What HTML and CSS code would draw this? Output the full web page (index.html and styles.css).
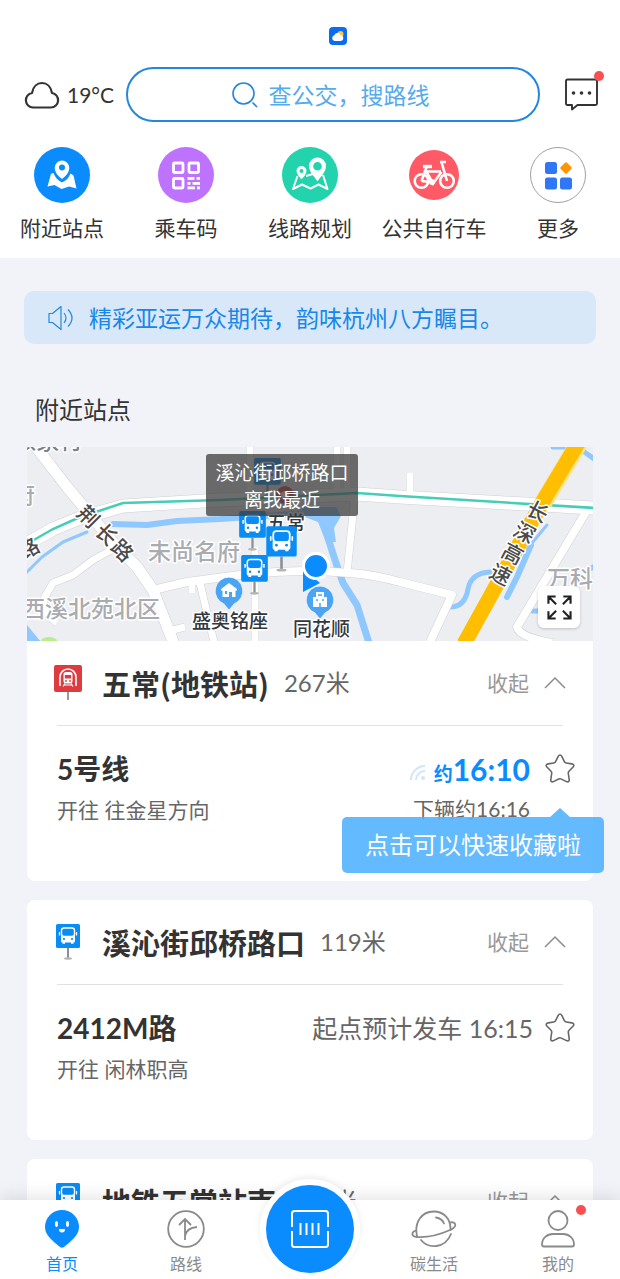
FILE: index.html
```html
<!DOCTYPE html>
<html lang="zh-CN">
<head>
  <meta charset="UTF-8" />
  <meta name="viewport" content="width=device-width, initial-scale=1" />
  <title>附近站点</title>
  <link rel="stylesheet" href="styles.css">
</head>
<body>
  <!-- shared icons -->
  <svg class="sprite" aria-hidden="true">
    <symbol id="bus-sign" viewBox="0 0 26 36">
      <rect x="12" y="24" width="2" height="11" fill="#8a8f96" />
      <ellipse cx="13" cy="34.5" rx="4" ry="1.2" fill="#b5b5b5" />
      <rect x="1" y="0" width="24" height="24" rx="1.5" fill="#0a8cf5" />
      <rect x="6.500" y="4" width="13" height="8.500" rx="2.500" fill="none" stroke="#fff" stroke-width="1.400" />
      <path d="M6 12h14v5q0 1.500-1.500 1.500h-11Q6 18.500 6 17z" fill="#fff" />
      <path d="M4.500 8v3.500M21.500 8v3.500" stroke="#fff" stroke-width="1.300" />
      <path d="M7.500 18h2.500v1.700H7.500zM16 18h2.500v1.700H16z" fill="#fff" />
      <circle cx="9" cy="15" r="1.100" fill="#0a8cf5" />
      <circle cx="17" cy="15" r="1.100" fill="#0a8cf5" />
    </symbol>
    <symbol id="metro-sign" viewBox="0 0 28 36">
      <rect x="13" y="27" width="2" height="8" fill="#999" />
      <rect x="0" y="0" width="28" height="27" rx="2" fill="#dd3b3f" />
      <path d="M6 21V12a8 8 0 0 1 16 0v9" fill="none" stroke="#fff" stroke-width="1.600" />
      <rect x="9.500" y="7" width="9" height="11.500" rx="2.500" fill="#fff" />
      <rect x="10.800" y="10" width="6.400" height="3.500" fill="#dd3b3f" />
      <circle cx="12" cy="16" r=".9" fill="#dd3b3f" />
      <circle cx="16" cy="16" r=".9" fill="#dd3b3f" />
      <path d="M11 18.500l-2 3M17 18.500l2 3M10.500 20h7" stroke="#fff" stroke-width="1.200" />
    </symbol>
    <symbol id="chevron-up" viewBox="0 0 22 14">
      <path d="M1 12L11 2l10 10" fill="none" stroke="#8c8c8c" stroke-width="1.500" />
    </symbol>
    <symbol id="star" viewBox="0 0 30 30">
      <path d="M13.200 2.400q1.800-2.800 3.600 0l2.600 5.200q.6 1.200 1.900 1.400l5.600.9q3 .7 1.200 3.100l-4.100 4.300q-.9.900-.7 2.200l.9 6q.2 3.200-2.700 2.100l-5.200-2.500q-1.300-.6-2.600 0l-5.200 2.500q-2.900 1.100-2.700-2.100l.9-6q.2-1.300-.7-2.200L1.900 13q-1.800-2.400 1.200-3.100l5.600-.9q1.300-.2 1.900-1.400z" fill="none" stroke="#666" stroke-width="1.600" stroke-linejoin="round" />
    </symbol>
  </svg>

  <div class="app">
    <header class="top">
      <div class="status">
        <svg class="status-icon" viewBox="0 0 18 18">
          <rect width="18" height="18" rx="4" fill="#0a6cf0" />
          <circle cx="11.500" cy="7" r="3" fill="#f7c948" />
          <path d="M5.500 14a3 3 0 0 1-.2-5.800 3.500 3.500 0 0 1 6.300-.3A3.100 3.100 0 0 1 12 14z" fill="#fff" />
        </svg>
      </div>

      <div class="search-row">
        <div class="weather">
          <svg class="weather-icon" viewBox="0 0 36 28">
            <path d="M9 26.500a7.300 7.300 0 0 1-1-14.500C9 5.800 13 2 18 2s9 3.800 10 10a7.300 7.300 0 0 1-1 14.500z" fill="none" stroke="#333" stroke-width="2.200" stroke-linejoin="round" />
          </svg>
          <span>19°C</span>
        </div>
        <label class="search">
          <svg class="search-icon" viewBox="0 0 26 26">
            <circle cx="11.500" cy="11.500" r="10.500" fill="none" stroke="#2287dd" stroke-width="1.600" />
            <path d="M20.500 20.500l4.500 4.500" stroke="#2287dd" stroke-width="1.600" />
          </svg>
          <input type="text" class="search-input" placeholder="查公交，搜路线" aria-label="搜索" />
        </label>
        <button type="button" class="message" aria-label="消息">
          <svg viewBox="0 0 34 34">
            <path d="M2.500 1.500h28q1.500 0 1.500 1.500v22.500q0 1.500-1.500 1.500H12.500L7 31.500V27H2.500Q1 27 1 25.500V3q0-1.500 1.500-1.500z" fill="none" stroke="#333" stroke-width="1.900" stroke-linejoin="round" />
            <g fill="#333"><circle cx="8.500" cy="15" r="1.800" /><circle cx="16.500" cy="15" r="1.800" /><circle cx="24.500" cy="15" r="1.800" /></g>
          </svg>
          <i class="dot"></i>
        </button>
      </div>

      <nav class="quick">
        <a href="#" class="quick-item">
          <svg viewBox="0 0 56 56">
            <circle cx="28" cy="28" r="28" fill="#0a8cff" />
            <path d="M19.500 26l-2.500.8-3.500 12.700 7-1.500 7 4 7.500-2.500 7.500 2-3-13-3-2c-1.500 4.500-5 7.500-8.500 9-4-2-7-5-8.500-9.500z" fill="#fff" />
            <path fill-rule="evenodd" d="M28 13.500a7.300 7.300 0 0 0-7.300 7.300c0 5 4.300 9 7.300 11.200 3-2.200 7.300-6.200 7.300-11.200a7.300 7.300 0 0 0-7.300-7.300zm0 4a3 3 0 1 1 0 6 3 3 0 0 1 0-6z" fill="#fff" />
          </svg>
          <span>附近站点</span>
        </a>
        <a href="#" class="quick-item">
          <svg viewBox="0 0 56 56">
            <circle cx="28" cy="28" r="28" fill="#bd73ff" />
            <g fill="none" stroke="#fff" stroke-width="2.800">
              <rect x="15.500" y="16" width="9.500" height="9.500" rx="1" />
              <rect x="31" y="16" width="9.500" height="9.500" rx="1" />
              <rect x="15.500" y="31.500" width="9.500" height="9.500" rx="1" />
            </g>
            <g fill="#fff">
              <rect x="29.500" y="30" width="7" height="2.800" /><rect x="38.500" y="30" width="3.500" height="2.800" />
              <rect x="29.500" y="35" width="3" height="2.800" /><rect x="34.500" y="35" width="7.500" height="2.800" />
              <rect x="29.500" y="39.500" width="7.500" height="2.800" /><rect x="39" y="39.500" width="3" height="2.800" />
            </g>
          </svg>
          <span>乘车码</span>
        </a>
        <a href="#" class="quick-item">
          <svg viewBox="0 0 56 56">
            <circle cx="28" cy="28" r="28" fill="#22d3ad" />
            <path d="M15.500 29l-4.500 13 9-4.500 8.500 4 8-4 9 4.500L41 28M24 29l7-2" fill="none" stroke="#fff" stroke-width="2" stroke-linejoin="round" />
            <path fill-rule="evenodd" d="M19.500 19a5 5 0 0 0-5 5c0 3 3 6 5 8.500 2-2.500 5-5.500 5-8.500a5 5 0 0 0-5-5zm0 3a2 2 0 1 1 0 4 2 2 0 0 1 0-4z" fill="#fff" />
            <path fill-rule="evenodd" d="M35.500 10.500a8.500 8.500 0 0 0-8.500 8.500c0 6 5.500 10.500 8.500 15.500 3-5 8.500-9.500 8.500-15.500a8.500 8.500 0 0 0-8.500-8.500zm0 4.500a4.300 4.300 0 1 1 0 8.600 4.300 4.300 0 0 1 0-8.600z" fill="#fff" />
          </svg>
          <span>线路规划</span>
        </a>
        <a href="#" class="quick-item">
          <svg viewBox="0 0 56 56">
            <circle cx="28" cy="28" r="25" fill="#ff5a65" />
            <g fill="none" stroke="#fff" stroke-width="2.600">
              <circle cx="15.500" cy="34" r="6.800" /><circle cx="41" cy="34" r="6.800" />
              <path d="M15.500 34L20.500 20.500M17.500 24.500H35M34 15h6M35.500 15l5.500 19M35.500 25L27 36.500 20.500 25M15.500 34l9 1" />
              <path d="M17 19.500h9" stroke-width="3.400" />
            </g>
            <circle cx="26" cy="35" r="3" fill="#fff" />
          </svg>
          <span>公共自行车</span>
        </a>
        <a href="#" class="quick-item">
          <svg viewBox="0 0 56 56">
            <circle cx="28" cy="28" r="27.500" fill="#fff" stroke="#888" stroke-width=".8" />
            <g fill="#2f77f6">
              <rect x="15" y="15" width="12" height="12" rx="2.500" />
              <rect x="15" y="30.500" width="12" height="12" rx="2.500" />
              <rect x="30" y="30.500" width="12" height="12" rx="2.500" />
            </g>
            <rect x="31.500" y="16.500" width="9" height="9" rx="1.500" fill="#ff9500" transform="rotate(45 36 21)" />
          </svg>
          <span>更多</span>
        </a>
      </nav>
    </header>

    <main class="content">
      <div class="notice">
        <svg class="notice-icon" viewBox="0 0 26 26">
          <path d="M1 8.500v9h3.500L13 24.500V1.500L4.500 8.500z" fill="none" stroke="#2287dd" stroke-width="1.200" stroke-linejoin="round" />
          <path d="M16 8q4 5 0 10M20 4.500q8 8.500 0 17" fill="none" stroke="#2287dd" stroke-width="1.200" />
        </svg>
        <span>精彩亚运万众期待，韵味杭州八方瞩目。</span>
      </div>

      <h2 class="section-title">附近站点</h2>

      <section class="card">
        <div class="map">
          <svg class="map-canvas" viewBox="0 0 566 194">
            <rect width="566" height="194" fill="#edeef1" />
            <!-- water -->
            <g fill="none" stroke="#8fc8ff" stroke-linecap="round" stroke-linejoin="round">
              <path d="M-2 127L15 110 36 95 60 85" stroke-width="3" />
              <path d="M86 77L120 78 150 74 193 72 280 66" stroke-width="6" />
              <path d="M300 88L309 116 316 136 330 158 342 196" stroke-width="7" />
              <path d="M520 78L505 96 500 110 490 130" stroke-width="3" />
              <path d="M504 98L490 130 480 150" stroke-width="6" />
              <path d="M463 125Q444 126 441 142 438 160 423 160" stroke-width="5" />
              <path d="M556 4l14 10M526 0h12M505 164h8M563 122l5-3" stroke-width="5" />
            </g>
            <path d="M275 60h34l5 9-7 12 2 14-10 0-8-20-16-6zM0 178l14 17H0z" fill="#8fc8ff" />
            <ellipse cx="22" cy="194" rx="8" ry="4" fill="#b9ec8c" />
            <!-- road edges, then road fill -->
            <g fill="none" stroke="#cfd0d4" stroke-linejoin="round">
              <path d="M223-2V50M310-2V48M320-2V48M383 26V50M328 48L320 126M228 100V195M173 136L187 195M165 134v12M142 184l16-4M88 101L66 113 46 128 26 136 16 153 20 168 30 176" stroke-width="8" />
              <path d="M126 143L160 135 213 128Q270 121 323 126 348 128 373 135L425 148 403 195M562 60L490 180Q492 190 525 196" stroke-width="9" />
              <path d="M-2 98L26 82 53 71 75 65 96 59 193 53 330 47 373 50 568 61" stroke-width="14" />
              <path d="M6-4L40 40 90 100 110 120 126 143 147 197" stroke-width="12" />
            </g>
            <g fill="none" stroke="#fff" stroke-linejoin="round">
              <path d="M223-2V50M310-2V48M320-2V48M383 26V50M328 48L320 126M228 100V195M173 136L187 195M165 134v12M142 184l16-4M88 101L66 113 46 128 26 136 16 153 20 168 30 176" stroke-width="7" />
              <path d="M126 143L160 135 213 128Q270 121 323 126 348 128 373 135L425 148 403 195M562 60L490 180Q492 190 525 196" stroke-width="8" />
              <path d="M-2 98L26 82 53 71 75 65 96 59 193 53 330 47 373 50 568 61" stroke-width="13" />
              <path d="M6-4L40 40 90 100 110 120 126 143 147 197" stroke-width="11" />
            </g>
            <path d="M-2 98L26 82 53 70 75 63 96 56 193 53 330 46 373 49 568 61" fill="none" stroke="#45cdb5" stroke-width="2.500" />
            <path d="M552-4L516 56" fill="none" stroke="#f6e489" stroke-width="18" />
            <path d="M551-4L515 56 437 197" fill="none" stroke="#ffbe00" stroke-width="15" />

            <!-- area names -->
            <g class="map-area">
              <text x="-14" y="2" class="map-dim">张家村</text>
              <text x="-15" y="56">府</text>
              <text x="121" y="113">未尚名府</text>
              <text x="-5" y="170">西溪北苑北区</text>
              <text x="520" y="140">万科</text>
            </g>
            <!-- road names, one glyph each along the road -->
            <g class="map-road">
              <text transform="translate(62 69) rotate(45)">荆</text>
              <text transform="translate(80 87) rotate(45)">长</text>
              <text transform="translate(96 103) rotate(45)">路</text>
              <text transform="translate(1 101) rotate(-30)">路</text>
              <text transform="translate(511 64) rotate(28)">长</text>
              <text transform="translate(498 85) rotate(28)">深</text>
              <text transform="translate(486 106) rotate(28)">高</text>
              <text transform="translate(474 127) rotate(28)">速</text>
            </g>
            <g class="map-poi">
              <text x="240" y="83">五常</text>
              <text x="165" y="181">盛奥铭座</text>
              <text x="266" y="189">同花顺</text>
            </g>

            <!-- poi pins -->
            <g fill="#4aa5f5">
              <path d="M202 130.500a13.500 13.500 0 0 1 5 26l-5 6-5-6a13.500 13.500 0 0 1 5-26z" />
              <path d="M293 139.500a13.500 13.500 0 0 1 5 26l-5 6-5-6a13.500 13.500 0 0 1 5-26z" />
            </g>
            <path d="M194 142l8-6 8 6v1.500h-1.500v6.500h-3.500v-5h-3v5h-6.500v-6.500H194z" fill="#fff" />
            <path d="M198 144h2v3h-2z" fill="#4aa5f5" />
            <path d="M289 145h8v5h3v10h-14v-10h3z" fill="#fff" />
            <path d="M291 148h4M289 153h2M295 153h2M293 156v4" stroke="#4aa5f5" stroke-width="1.500" />

            <!-- stops -->
            <circle cx="258" cy="48" r="9" fill="#d94545" />
            <circle cx="258" cy="48" r="4" fill="#fff" />
            <use href="#bus-sign" x="226" y="11" width="29" height="40" />
            <use href="#bus-sign" x="211" y="64" width="29" height="40" />
            <use href="#bus-sign" x="213" y="108" width="29" height="40" />
            <use href="#bus-sign" x="238" y="79" width="33" height="46" />

            <!-- own position -->
            <path d="M276 122v23l17-9z" fill="#0a8cff" />
            <circle cx="289" cy="119" r="12.500" fill="#0a8cff" stroke="#fff" stroke-width="3" />

            <rect x="179" y="7" width="152" height="62" rx="3" fill="#3c3c3c" fill-opacity=".75" />
            <g class="map-tip">
              <text x="255" y="33">溪沁街邱桥路口</text>
              <text x="255" y="60">离我最近</text>
            </g>
          </svg>
          <button type="button" class="expand" aria-label="放大地图">
            <svg viewBox="0 0 26 26">
              <path d="M1.500 9V1.500H9M1.500 1.500l8 8M17 1.500h7.500V9M24.500 1.500l-8 8M1.500 17v7.500H9M1.500 24.500l8-8M17 24.500h7.500V17M24.500 24.500l-8-8" fill="none" stroke="#222" stroke-width="2.200" />
            </svg>
          </button>
        </div>

        <div class="station">
          <svg class="sign"><use href="#metro-sign" /></svg>
          <h3 class="station-name">五常(地铁站)</h3>
          <span class="distance">267米</span>
          <button type="button" class="fold">收起 <svg><use href="#chevron-up" /></svg></button>
        </div>
        <div class="line">
          <div class="line-info">
            <h4 class="line-name">5号线</h4>
            <p class="line-to">开往 往金星方向</p>
          </div>
          <div class="arrival">
            <p class="next">
              <svg class="signal" viewBox="0 0 16 16">
                <g fill="none" stroke="#cfe6fa" stroke-width="2"><path d="M1 15A14 14 0 0 1 15 1M6 15a9 9 0 0 1 9-9" /></g>
                <circle cx="13" cy="13" r="2" fill="#cfe6fa" />
              </svg>
              <small>约</small><strong>16:10</strong>
            </p>
            <p class="after">下辆约16:16</p>
          </div>
          <div class="fav-wrap">
            <button type="button" class="fav" aria-label="收藏"><svg><use href="#star" /></svg></button>
            <div class="fav-tip">点击可以快速收藏啦</div>
          </div>
        </div>
      </section>

      <section class="card">
        <div class="station">
          <svg class="sign"><use href="#bus-sign" /></svg>
          <h3 class="station-name">溪沁街邱桥路口</h3>
          <span class="distance">119米</span>
          <button type="button" class="fold">收起 <svg><use href="#chevron-up" /></svg></button>
        </div>
        <div class="line">
          <div class="line-info">
            <h4 class="line-name">2412M路</h4>
            <p class="line-to">开往 闲林职高</p>
          </div>
          <div class="arrival">
            <p class="planned">起点预计发车 16:15</p>
          </div>
          <div class="fav-wrap">
            <button type="button" class="fav" aria-label="收藏"><svg><use href="#star" /></svg></button>
          </div>
        </div>
      </section>

      <section class="card">
        <div class="station">
          <svg class="sign"><use href="#bus-sign" /></svg>
          <h3 class="station-name">地铁五常站南</h3>
          <span class="distance">305米</span>
          <button type="button" class="fold">收起 <svg><use href="#chevron-up" /></svg></button>
        </div>
      </section>
    </main>

    <nav class="tabbar">
      <a href="#" class="tab active">
        <svg viewBox="0 0 38 38">
          <path d="M19 0a17 17 0 0 1 17 17c0 7-5 11-9.500 15.500L21 37q-2 1.500-4 0l-5.500-4.500C7 28 2 24 2 17A17 17 0 0 1 19 0z" fill="#0a8cff" />
          <ellipse cx="13.500" cy="14" rx="1.500" ry="3" fill="#fff" /><ellipse cx="24.500" cy="14" rx="1.500" ry="3" fill="#fff" />
          <path d="M16 19h6q0 3.500-3 3.500T16 19z" fill="#fff" />
        </svg>
        <span>首页</span>
      </a>
      <a href="#" class="tab">
        <svg viewBox="0 0 38 38" fill="none" stroke="#8a8a8a" stroke-width="1.800">
          <circle cx="19" cy="19" r="17.800" />
          <path d="M18 30V9M12 15l6-6 6 6M18 26c1-5 5-8.500 12-9" />
        </svg>
        <span>路线</span>
      </a>
      <a href="#" class="tab-main" aria-label="乘车码">
        <svg viewBox="0 0 38 38" fill="none" stroke="#fff" stroke-width="2">
          <path d="M1 17V3.500Q1 1 3.500 1h31Q37 1 37 3.500V17M37 21v13.500q0 2.500-2.500 2.500h-31Q1 37 1 34.500V21" />
          <path d="M9.500 13v12M15.500 13v12M21.500 13v12M27.500 13v12" />
        </svg>
      </a>
      <a href="#" class="tab">
        <svg class="wide" viewBox="0 0 46 38" fill="none" stroke="#8a8a8a" stroke-width="1.800" stroke-linecap="round">
          <path d="M6 26C3 12 11 1.500 22.500 1.500 33 1.500 40 9 39.500 20M10 30c7 9 24 9 30-6" />
          <path d="M39 12.500c6-1.500 8 4 0 7.500C28 25 16 27.500 6 27c-6-.5-6-5-1-6.500M25 7.500q6 1 8 6" />
        </svg>
        <span>碳生活</span>
      </a>
      <a href="#" class="tab">
        <svg viewBox="0 0 38 38" fill="none" stroke="#8a8a8a" stroke-width="1.800">
          <circle cx="19" cy="10.500" r="9.500" />
          <path d="M5 36.500q-2 0-2-2C3 28 8 24 14 24h10c6 0 11 4 11 10.500q0 2-2 2z" />
        </svg>
        <span>我的</span>
        <i class="dot"></i>
      </a>
    </nav>
  </div>
</body>
</html>
```
FILE: styles.css
```css
* {
  box-sizing: border-box;
}
body {
  margin: 0;
  font-family: Lato, "Noto Sans CJK SC", sans-serif;
  color: #333;
  background: #f2f3f8;
}
h2, h3, h4, p {
  margin: 0;
}
a {
  color: inherit;
  text-decoration: none;
}
button {
  padding: 0;
  border: none;
  background: none;
  font: inherit;
  color: inherit;
  cursor: pointer;
}
svg {
  display: block;
}
.sprite {
  position: absolute;
  width: 0;
  height: 0;
}
.app {
  display: flex;
  flex-direction: column;
  height: 100vh;
}

/* header */
.top {
  flex: none;
  background: #fff;
  padding-bottom: 15px;
}
.status {
  display: flex;
  justify-content: center;
  padding: 27px 0 22px 55px;
}
.status-icon {
  width: 18px;
  height: 18px;
}
.search-row {
  display: flex;
  align-items: center;
  padding: 0 21px 0 24px;
}
.weather {
  display: flex;
  align-items: center;
  gap: 7px;
  width: 102px;
  font-size: 21px;
  line-height: 28px;
}
.weather-icon {
  width: 36px;
  height: 28px;
}
.search {
  flex: 1;
  display: flex;
  align-items: center;
  justify-content: center;
  gap: 11px;
  height: 55px;
  border: 2px solid #2287dd;
  border-radius: 28px;
}
.search-icon {
  width: 26px;
  height: 26px;
}
.search-input {
  width: 166px;
  padding: 0;
  border: none;
  outline: none;
  background: none;
  font: inherit;
  font-size: 23px;
  line-height: 32px;
}
.search-input::placeholder {
  color: #55abed;
  opacity: 1;
}
.message {
  position: relative;
  width: 34px;
  height: 34px;
  margin-left: 25px;
}
.dot {
  position: absolute;
  top: -7px;
  right: -5px;
  width: 10px;
  height: 10px;
  border-radius: 50%;
  background: #f94f50;
}
.quick {
  display: grid;
  grid-template-columns: repeat(5, 1fr);
  padding-top: 25px;
}
.quick-item {
  display: flex;
  flex-direction: column;
  align-items: center;
  gap: 10px;
  font-size: 21px;
  line-height: 30px;
}
.quick-item svg {
  width: 56px;
  height: 56px;
}

/* content */
.content {
  flex: 1;
  min-height: 0;
  overflow: hidden;
  padding: 33px 27px 0;
}
.notice {
  display: flex;
  align-items: center;
  gap: 15px;
  height: 53px;
  margin: 0 -3px;
  padding-left: 24px;
  border-radius: 10px;
  background: #d9e8f9;
  color: #1787ea;
  font-size: 23px;
  line-height: 32px;
  white-space: nowrap;
}
.notice-icon {
  flex: none;
  width: 26px;
  height: 26px;
}
.section-title {
  padding: 48px 0 19px 8px;
  font-size: 24px;
  line-height: 36px;
  font-weight: normal;
}
.card {
  margin-bottom: 19px;
  padding-bottom: 48px;
  border-radius: 8px;
  background: #fff;
}

/* map */
.map {
  position: relative;
}
.map-canvas {
  width: 100%;
  height: auto;
}
.map-canvas text {
  paint-order: stroke;
  stroke: #fff;
  stroke-width: 3px;
  stroke-linejoin: round;
}
.map-area text {
  font-size: 23px;
  font-weight: 500;
  fill: #a9abb0;
}
.map-area .map-dim {
  fill: #7d8084;
}
.map-road text {
  font-size: 21px;
  font-weight: 500;
  fill: #4a4a4a;
  text-anchor: middle;
  dominant-baseline: central;
}
.map-poi text {
  font-size: 19px;
  font-weight: 500;
  fill: #33383f;
}
.map-tip text {
  font-size: 19px;
  fill: #fff;
  stroke: none;
  text-anchor: middle;
}
.expand {
  position: absolute;
  right: 13px;
  bottom: 13px;
  display: grid;
  place-items: center;
  width: 42px;
  height: 42px;
  border-radius: 6px;
  background: #fff;
  box-shadow: 0 1px 3px rgba(0, 0, 0, 0.2);
}
.expand svg {
  width: 25px;
  height: 25px;
}

/* station and line rows */
.station {
  display: flex;
  align-items: center;
  height: 85px;
  margin: 0 30px;
  border-bottom: 1px solid #e2e2e2;
}
.sign {
  width: 28px;
  height: 36px;
  margin: 0 20px 0 -3px;
}
.station-name {
  margin-right: 15px;
  font-family: "Noto Sans CJK SC", sans-serif;
  font-size: 29px;
  line-height: 40px;
}
.distance {
  color: #666;
  font-size: 24px;
  line-height: 36px;
}
.fold {
  display: flex;
  align-items: center;
  gap: 15px;
  margin: 0 -3px 0 auto;
  color: #999;
  font-size: 21px;
  line-height: 30px;
}
.fold svg {
  width: 22px;
  height: 14px;
}
.line {
  display: flex;
  padding: 23px 18px 0 30px;
}
.line-name {
  font-size: 28px;
  line-height: 40px;
}
.line-to {
  margin-top: 6px;
  color: #666;
  font-size: 21px;
  line-height: 30px;
}
.line-info {
  padding-bottom: 8px;
}
.arrival {
  margin-left: auto;
  padding-right: 12px;
  text-align: right;
}
.next {
  display: flex;
  align-items: baseline;
  justify-content: flex-end;
  padding-right: 3px;
  color: #0a8cff;
  line-height: 40px;
}
.next small {
  font-size: 19px;
  font-weight: bold;
  line-height: 20px;
}
.next strong {
  font-size: 30px;
}
.signal {
  width: 16px;
  height: 16px;
  margin-right: 8px;
}
.after {
  margin-top: 5px;
  padding-right: 3px;
  color: #666;
  font-size: 21px;
  line-height: 30px;
}
.planned {
  color: #666;
  font-size: 25px;
  line-height: 40px;
}
.fav-wrap {
  position: relative;
}
.fav {
  display: block;
  padding: 5px 0;
}
.fav svg {
  width: 30px;
  height: 30px;
}
.fav-tip {
  position: absolute;
  top: 68px;
  right: -29px;
  padding: 10px 23px;
  border-radius: 5px;
  background: rgba(82, 178, 255, 0.9);
  color: #fff;
  font-size: 24px;
  line-height: 36px;
  white-space: nowrap;
}
.fav-tip::before {
  content: "";
  position: absolute;
  top: -9px;
  right: 34px;
  border: 10px solid transparent;
  border-top: none;
  border-bottom: 9px solid rgba(82, 178, 255, 0.9);
}

/* bottom tabs */
.tabbar {
  position: relative;
  flex: none;
  display: grid;
  grid-template-columns: repeat(5, 1fr);
  height: 79px;
  background: #fff;
  box-shadow: 0 -4px 16px rgba(0, 0, 0, 0.1);
}
.tab {
  position: relative;
  display: flex;
  flex-direction: column;
  align-items: center;
  gap: 4px;
  padding-top: 10px;
  color: #8a8a8a;
  font-size: 16px;
  line-height: 24px;
}
.tab.active {
  color: #0a8cff;
}
.tab svg {
  width: 38px;
  height: 38px;
}
.tab .wide {
  width: 46px;
}
.tab .dot {
  top: 5px;
  right: 34px;
}
.tab-main {
  display: grid;
  place-items: center;
  justify-self: center;
  width: 100px;
  height: 100px;
  margin-top: -21px;
  border: 6px solid #fff;
  border-radius: 50%;
  background: #0a8cff;
  box-shadow: 0 -2px 6px rgba(0, 0, 0, 0.08);
}
.tab-main svg {
  width: 38px;
  height: 38px;
}
```
